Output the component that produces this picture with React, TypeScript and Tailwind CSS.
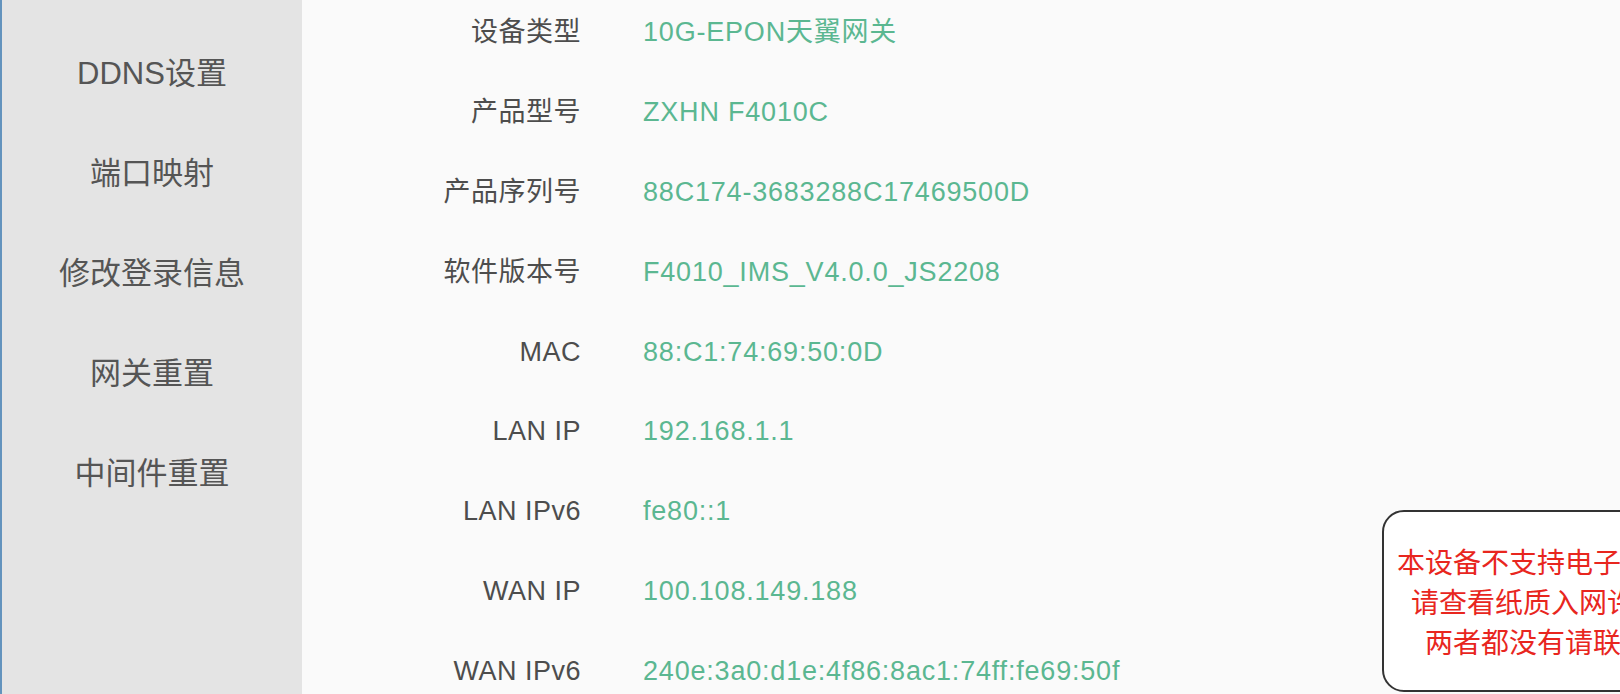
const menu = ['DDNS设置', '端口映射', '修改登录信息', '网关重置', '中间件重置'];

const info: { label: string; value: string }[] = [
  { label: '设备类型', value: '10G-EPON天翼网关' },
  { label: '产品型号', value: 'ZXHN F4010C' },
  { label: '产品序列号', value: '88C174-3683288C17469500D' },
  { label: '软件版本号', value: 'F4010_IMS_V4.0.0_JS2208' },
  { label: 'MAC', value: '88:C1:74:69:50:0D' },
  { label: 'LAN IP', value: '192.168.1.1' },
  { label: 'LAN IPv6', value: 'fe80::1' },
  { label: 'WAN IP', value: '100.108.149.188' },
  { label: 'WAN IPv6', value: '240e:3a0:d1e:4f86:8ac1:74ff:fe69:50f' },
];

export default function App() {
  return (
    <div
      className="relative flex h-[694px] w-[1620px] overflow-hidden bg-[#fafafa]"
      style={{ fontFamily: '"Liberation Sans", "Noto Sans CJK SC", sans-serif' }}
    >
      <div className="w-[2px] shrink-0 bg-[#6393bd]" />

      {/* side menu */}
      <aside className="flex w-[300px] shrink-0 flex-col bg-[#e4e4e4] pt-[23px]">
        {menu.map((item) => (
          <div key={item} className="flex h-[100px] items-center justify-center text-[31px] leading-none text-[#555]">
            {item}
          </div>
        ))}
      </aside>

      {/* device info */}
      <main className="flex-1">
        <div className="-mt-[7px] flex flex-col">
          {info.map((row) => (
            <div key={row.label} className="flex h-[79.8px] items-center gap-[62px] text-[27px] leading-none">
              <span className="w-[279px] text-right tracking-[0.5px] text-[#4d4d4d]">{row.label}</span>
              <span className="tracking-[0.8px] text-[#5bb791]">{row.value}</span>
            </div>
          ))}
        </div>
      </main>

      {/* notice popup */}
      <div className="absolute left-[1382px] top-[510px] flex h-[182px] w-[394px] items-center justify-center rounded-[22px] border-2 border-[#333] bg-white pt-[5px]">
        <p className="whitespace-nowrap text-center text-[28px] leading-[40px] text-[#e8261e]">
          本设备不支持电子入网许可，
          <br />
          请查看纸质入网许可证标识
          <br />
          两者都没有请联系客服。
        </p>
      </div>
    </div>
  );
}
